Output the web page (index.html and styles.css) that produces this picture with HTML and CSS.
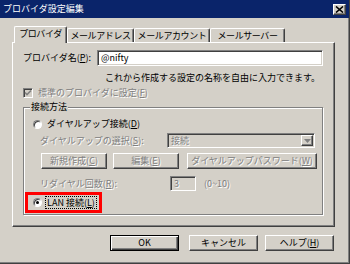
FILE: index.html
```html
<!DOCTYPE html>
<html lang="ja">
<head>
    <meta charset="UTF-8">
    <title>プロバイダ設定編集</title>
    <link rel="stylesheet" href="styles.css">
</head>
<body>
    <div class="ventana">
        <div class="barra-titulo">
            <span class="titulo">プロバイダ設定編集</span>
            <span class="cerrar">
                <svg width="9" height="7" viewBox="0 0 9 7"><path d="M1 0.5 L8 6.5 M8 0.5 L1 6.5" stroke="#000" stroke-width="1.6" fill="none"/></svg>
            </span>
        </div>
        <div class="cliente">
            <!-- Pestañas -->
            <div class="pestanas">
                <div class="pestana activa p1">プロバイダ</div>
                <div class="pestana p2">メールアドレス</div>
                <div class="pestana p3">メールアカウント</div>
                <div class="pestana p4">メールサーバー</div>
            </div>
            <div class="panel">
                <div class="fila-nombre">
                    <span class="etiqueta-nombre">プロバイダ名(<u>P</u>):</span>
                    <div class="edicion nombre">@nifty</div>
                </div>
                <div class="ayuda">これから作成する設定の名称を自由に入力できます。</div>
                <div class="fila-check inactivo">
                    <span class="casilla">
                        <svg width="8" height="8" viewBox="0 0 8 8"><path d="M1 3.5 L3 5.5 L7 1.5" stroke="#808080" stroke-width="1.6" fill="none"/></svg>
                    </span>
                    <span>標準のプロバイダに設定(<u>F</u>)</span>
                </div>

                <!-- Grupo de conexión -->
                <div class="grupo">
                    <div class="grupo-titulo">接続方法</div>
                    <div class="fila-radio">
                        <span class="radio"></span>
                        <span>ダイヤルアップ接続(<u>D</u>)</span>
                    </div>
                    <div class="fila-select inactivo">
                        <span class="etiqueta-select">ダイヤルアップの選択(<u>S</u>):</span>
                        <div class="combo">
                            <span class="combo-texto">接続</span>
                            <span class="combo-boton">
                                <svg width="7" height="4" viewBox="0 0 7 4"><path d="M0 0 H7 L3.5 4 Z" fill="#808080"/></svg>
                            </span>
                        </div>
                    </div>
                    <div class="fila-botones inactivo">
                        <div class="boton b-nuevo">新規作成(<u>C</u>)</div>
                        <div class="boton b-editar">編集(<u>E</u>)</div>
                        <div class="boton b-clave">ダイヤルアップパスワード(<u>W</u>)</div>
                    </div>
                    <div class="fila-redial inactivo">
                        <span class="etiqueta-redial">リダイヤル回数(<u>R</u>):</span>
                        <div class="edicion redial">3</div>
                        <span>(0~10)</span>
                    </div>
                    <div class="marca-lan">
                        <span class="radio marcado"></span>
                        <span class="foco">LAN 接続(<u>L</u>)</span>
                    </div>
                </div>
            </div>
            <div class="botones">
                <div class="boton predeterminado">OK</div>
                <div class="boton b-cancelar">キャンセル</div>
                <div class="boton">ヘルプ(<u>H</u>)</div>
            </div>
        </div>
    </div>
</body>
</html>
```

FILE: styles.css
```css
body {
    margin: 0;
    padding: 0;
    font-family: "Noto Sans CJK JP", "Noto Sans", sans-serif;
    font-size: 9px;
    line-height: 12px;
    color: #000;
    background: #d4d0c8;
}
u {
    text-decoration: underline;
    text-underline-offset: 1px;
}
.ventana {
    width: 350px;
    height: 264px;
    box-sizing: border-box;
    background: #d4d0c8;
    border-right: 1px solid #404040;
    border-bottom: 1px solid #404040;
}
.barra-titulo {
    height: 18px;
    background: #0a246a;
    display: flex;
    align-items: center;
    justify-content: space-between;
    padding: 0 3px 0 3px;
}
.titulo {
    color: #fff;
}
.cerrar {
    width: 13px;
    height: 11px;
    box-sizing: border-box;
    background: #d4d0c8;
    border: 1px solid;
    border-color: #fff #404040 #404040 #fff;
    box-shadow: inset -1px -1px 0 #808080;
    display: flex;
    align-items: center;
    justify-content: center;
}
.cliente {
    height: 245px;
    box-sizing: border-box;
    border-right: 1px solid #808080;
    border-bottom: 1px solid #808080;
    padding: 8px 0 0 12px;
}
/* Pestañas */
.pestanas {
    display: flex;
    align-items: flex-end;
    height: 16px;
    padding-left: 2px;
}
.pestana {
    height: 14px;
    box-sizing: border-box;
    border-top: 1px solid #fff;
    border-left: 1px solid #fff;
    border-right: 1px solid #404040;
    box-shadow: inset -1px 0 0 #808080;
    border-radius: 2px 2px 0 0;
    text-align: center;
    line-height: 13px;
    letter-spacing: -0.4px;
    white-space: nowrap;
}
.pestana.activa {
    height: 17px;
    margin-bottom: -1px;
    background: #d4d0c8;
    position: relative;
    z-index: 1;
    line-height: 14px;
}
.p1 { width: 53px; }
.p2 { width: 67px; }
.p3 { width: 76px; }
.p4 { width: 75px; }
.panel {
    width: 323px;
    height: 185px;
    box-sizing: border-box;
    border: 1px solid;
    border-color: #fff #404040 #404040 #fff;
    box-shadow: inset -1px -1px 0 #808080;
}
.inactivo {
    color: #808080;
    text-shadow: 1px 1px 0 #fff;
}
.fila-nombre {
    display: flex;
    align-items: center;
    margin-top: 7px;
    padding-left: 10px;
}
.etiqueta-nombre {
    width: 74px;
}
.edicion {
    height: 16px;
    box-sizing: border-box;
    border: 1px solid;
    border-color: #808080 #fff #fff #808080;
    box-shadow: inset 1px 1px 0 #404040, inset -1px -1px 0 #d4d0c8;
    background: #fff;
    padding-left: 3px;
    line-height: 14px;
}
.nombre {
    width: 226px;
}
.ayuda {
    margin-top: 6px;
    padding-right: 14px;
    text-align: right;
}
.fila-check {
    display: flex;
    align-items: center;
    margin-top: 3px;
    padding-left: 10px;
}
.casilla {
    width: 10px;
    height: 10px;
    box-sizing: border-box;
    border: 1px solid;
    border-color: #808080 #fff #fff #808080;
    box-shadow: inset 1px 1px 0 #404040;
    background: #d4d0c8;
    margin-right: 5px;
    display: flex;
    align-items: center;
    justify-content: center;
}
/* Grupo */
.grupo {
    width: 300px;
    box-sizing: border-box;
    margin: 8px 0 0 10px;
    border: 1px solid #808080;
    box-shadow: inset 1px 1px 0 #fff, 1px 1px 0 #fff;
    padding-bottom: 1px;
}
.grupo-titulo {
    width: max-content;
    margin: -7px 0 0 6px;
    padding: 0 1px;
    background: #d4d0c8;
}
.fila-radio {
    display: flex;
    align-items: center;
    margin-top: 5px;
    padding-left: 9px;
}
.radio {
    width: 9px;
    height: 9px;
    box-sizing: border-box;
    border-radius: 50%;
    border: 1px solid;
    border-color: #808080 #fff #fff #808080;
    box-shadow: inset 1px 1px 0 #404040;
    background: #fff;
    margin-right: 5px;
    display: flex;
    align-items: center;
    justify-content: center;
}
.radio.marcado::after {
    content: "";
    width: 3px;
    height: 3px;
    border-radius: 50%;
    background: #000;
}
.fila-select {
    display: flex;
    align-items: center;
    margin-top: 3px;
    padding-left: 16px;
}
.etiqueta-select {
    width: 127px;
}
.combo {
    width: 148px;
    height: 15px;
    box-sizing: border-box;
    border: 1px solid;
    border-color: #808080 #fff #fff #808080;
    box-shadow: inset 1px 1px 0 #404040, inset -1px -1px 0 #d4d0c8;
    display: flex;
    align-items: center;
    justify-content: space-between;
    padding: 1px;
}
.combo-texto {
    padding-left: 2px;
}
.combo-boton {
    width: 12px;
    height: 11px;
    box-sizing: border-box;
    border: 1px solid;
    border-color: #fff #404040 #404040 #fff;
    box-shadow: inset -1px -1px 0 #808080;
    display: flex;
    align-items: center;
    justify-content: center;
}
.fila-botones {
    display: flex;
    margin-top: 5px;
    padding-left: 17px;
}
.boton {
    width: 69px;
    height: 16px;
    box-sizing: border-box;
    border: 1px solid;
    border-color: #fff #404040 #404040 #fff;
    box-shadow: inset -1px -1px 0 #808080;
    background: #d4d0c8;
    text-align: center;
    line-height: 14px;
    white-space: nowrap;
}
.b-nuevo { width: 66px; margin-right: 6px; }
.b-editar { width: 66px; margin-right: 8px; }
.b-clave { width: 130px; }
.fila-redial {
    display: flex;
    align-items: center;
    margin-top: 7px;
    padding-left: 16px;
}
.etiqueta-redial {
    width: 130px;
}
.redial {
    width: 26px;
    height: 15px;
    background: #d4d0c8;
    margin-right: 8px;
}
.marca-lan {
    width: 77px;
    height: 21px;
    box-sizing: border-box;
    margin: 1px 0 0 1px;
    border: 3px solid #f00;
    display: flex;
    align-items: center;
    padding-left: 5px;
}
.marca-lan .radio {
    margin-right: 3px;
}
.foco {
    border: 1px dotted #000;
    padding: 0 1px;
    line-height: 11px;
}
/* Botones inferiores */
.botones {
    display: flex;
    margin-top: 8px;
    padding-left: 98px;
}
.predeterminado {
    border: 1px solid #000;
    box-shadow: inset 1px 1px 0 #fff, inset -1px -1px 0 #404040, inset -2px -2px 0 #808080;
    margin-right: 10px;
}
.b-cancelar {
    margin-right: 7px;
}
```
